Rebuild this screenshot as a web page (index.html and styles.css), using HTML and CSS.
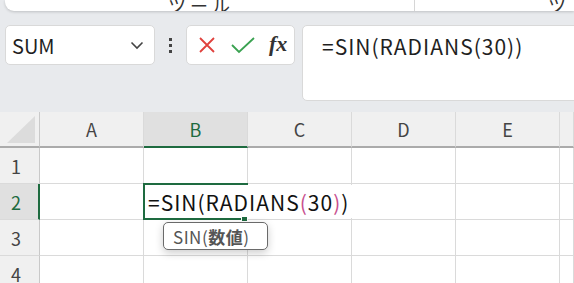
FILE: index.html
```html
<!DOCTYPE html>
<html lang="ja">

<head>
    <meta charset="UTF-8">
    <meta name="viewport" content="width=device-width, initial-scale=1.0">
    <title>SIN(RADIANS(30))</title>
    <link rel="stylesheet" href="styles.css">
</head>

<body>

    <!-- ribbon, cut off at the top of the window -->
    <div class="ribbon">
        <div class="ribbon-group first"><span class="ribbon-label">ツール</span></div>
        <div class="ribbon-group"><span class="ribbon-label">ツ</span></div>
    </div>

    <div class="toolbar">
        <div class="namebox">
            <span>SUM</span>
            <svg class="chevron" width="14" height="9" viewBox="0 0 14 9">
                <path d="M1.5 1.5 L7 7 L12.5 1.5" fill="none" stroke="#444" stroke-width="1.6" />
            </svg>
        </div>
        <div class="dots"><i></i><i></i><i></i></div>
        <div class="actions">
            <svg width="20" height="20" viewBox="0 0 20 20">
                <path d="M3 3 L17 17 M17 3 L3 17" stroke="#e0413d" stroke-width="1.8" />
            </svg>
            <svg width="26" height="20" viewBox="0 0 26 20">
                <path d="M2 10 L9 17 L24 3" fill="none" stroke="#3aa251" stroke-width="1.8" />
            </svg>
            <span class="fx">fx</span>
        </div>
        <div class="formula">=SIN(RADIANS(30))</div>
    </div>

    <div class="sheet">
        <div class="grid">
            <div class="corner"><span class="tri"></span></div>
            <div class="col">A</div>
            <div class="col sel">B</div>
            <div class="col">C</div>
            <div class="col">D</div>
            <div class="col">E</div>
            <div class="col"></div>

            <div class="row">1</div>
            <div class="cell"></div><div class="cell"></div><div class="cell"></div>
            <div class="cell"></div><div class="cell"></div><div class="cell"></div>

            <div class="row sel">2</div>
            <div class="cell"></div>
            <div class="cell active">
                <span class="edit">=SIN(RADIANS<b class="p1">(</b>30<b class="p1">)</b>)</span>
                <span class="handle"></span>
            </div>
            <div class="cell"></div><div class="cell"></div><div class="cell"></div><div class="cell"></div>

            <div class="row">3</div>
            <div class="cell"></div><div class="cell"></div><div class="cell"></div>
            <div class="cell"></div><div class="cell"></div><div class="cell"></div>

            <div class="row">4</div>
            <div class="cell"></div><div class="cell"></div><div class="cell"></div>
            <div class="cell"></div><div class="cell"></div><div class="cell"></div>
        </div>

        <div class="tip">SIN(<b>数値</b>)</div>
    </div>

</body>

</html>
```

FILE: styles.css
```css
* {
    margin: 0;
    padding: 0;
    box-sizing: border-box;
}

body {
    background-color: #e8eaed;
    font-family: "Noto Sans CJK JP", "Noto Sans", sans-serif;
    color: #222;
    width: 574px;
    height: 283px;
    overflow: hidden;
}

/* ribbon */
.ribbon {
    display: flex;
    height: 11px;
    margin-left: 5px;
    background-color: #fff;
    border-bottom-left-radius: 9px;
    box-shadow: 0 1px 3px rgba(0, 0, 0, 0.18);
    overflow: hidden;
}

.ribbon-group {
    display: flex;
    align-items: flex-end;
    height: 11px;
}

.ribbon-group.first {
    width: 410px;
    padding-left: 163px;
    border-right: 1px solid #d6d6d6;
}

.ribbon-group:last-child {
    flex: 1;
    justify-content: flex-end;
    padding-right: 4px;
}

.ribbon-label {
    font-size: 18px;
    line-height: 18px;
    margin-bottom: -3px;
    color: #333;
    letter-spacing: 4px;
}

/* name box + formula bar */
.toolbar {
    display: flex;
    align-items: flex-start;
    padding: 14px 0 0 5px;
}

.namebox {
    display: flex;
    align-items: center;
    justify-content: space-between;
    width: 150px;
    height: 40px;
    padding: 0 10px 0 6px;
    background-color: #fff;
    border: 1px solid #d9d9d9;
    border-radius: 5px;
    font-size: 20px;
    color: #1f1f1f;
}

.dots {
    display: flex;
    flex-direction: column;
    align-items: center;
    justify-content: center;
    gap: 3px;
    width: 31px;
    height: 40px;
}

.dots i {
    width: 3px;
    height: 3px;
    background-color: #444;
}

.actions {
    display: flex;
    align-items: center;
    gap: 13px;
    width: 109px;
    height: 40px;
    padding-left: 10px;
    background-color: #fff;
    border: 1px solid #d9d9d9;
    border-radius: 5px;
}

.fx {
    font-family: "Liberation Serif", serif;
    font-style: italic;
    font-weight: bold;
    font-size: 22px;
    color: #333;
    margin-top: -3px;
}

.formula {
    flex: 1;
    height: 76px;
    margin-left: 7px;
    margin-right: -10px;
    padding: 5px 0 0 19px;
    background-color: #fff;
    border: 1px solid #d9d9d9;
    border-radius: 5px;
    font-size: 21px;
    letter-spacing: 1px;
    color: #1f1f1f;
}

/* sheet */
.sheet {
    position: relative;
    margin-top: 11px;
    background-color: #fff;
}

.grid {
    display: grid;
    grid-template-columns: 40px repeat(5, 104px) 1fr;
    grid-template-rows: 36px repeat(4, 36px);
}

.corner,
.col,
.row {
    background-color: #f0f0f0;
    color: #444;
    font-size: 18px;
}

.corner {
    position: relative;
    border-right: 1px solid #c9c9c9;
    border-bottom: 2px solid #ababab;
}

.tri {
    position: absolute;
    right: 4px;
    bottom: 3px;
    width: 0;
    height: 0;
    border-left: 28px solid transparent;
    border-bottom: 27px solid #dcdcdc;
}

.col {
    display: flex;
    align-items: center;
    justify-content: center;
    border-right: 1px solid #dadada;
    border-bottom: 2px solid #ababab;
}

.col.sel {
    background-color: #e0e0e0;
    color: #1e6b40;
    border-bottom-color: #1e6b40;
}

.row {
    display: flex;
    align-items: center;
    padding-left: 11px;
    border-right: 1px solid #c9c9c9;
    border-bottom: 1px solid #dadada;
}

.row.sel {
    background-color: #e0e0e0;
    color: #1e6b40;
    border-right: 2px solid #1e6b40;
}

.cell {
    border-right: 1px solid #dadada;
    border-bottom: 1px solid #dadada;
}

.cell.active {
    position: relative;
    margin: -1px 0 0 -1px;
    border: 2px solid #1e6b40;
    border-right: none;
}

.edit {
    position: absolute;
    left: 0;
    top: 0;
    bottom: 0;
    display: flex;
    align-items: center;
    padding: 0 4px 0 3px;
    background-color: #fff;
    font-size: 21px;
    letter-spacing: 1px;
    color: #111;
    white-space: nowrap;
}

.edit b {
    font-weight: normal;
}

.p1 {
    color: #c8508f;
}

.handle {
    position: absolute;
    right: 0;
    bottom: -4px;
    width: 7px;
    height: 6px;
    background-color: #1e6b40;
    border: 1px solid #fff;
}

.tip {
    position: absolute;
    left: 163px;
    top: 110px;
    width: 105px;
    height: 28px;
    padding: 0 0 0 9px;
    display: flex;
    align-items: center;
    background-color: #fff;
    border: 1.5px solid #6a6a6a;
    border-radius: 5px;
    box-shadow: 0 3px 8px rgba(0, 0, 0, 0.2);
    font-size: 17px;
    letter-spacing: 0.5px;
    color: #555;
}
```
